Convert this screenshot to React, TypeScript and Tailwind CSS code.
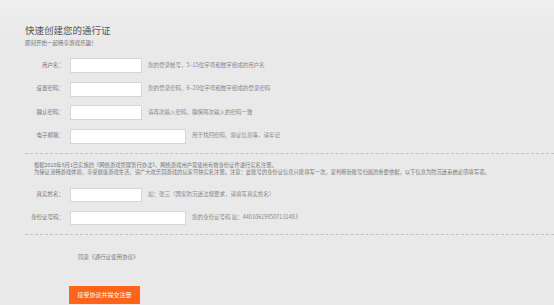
import React from "react";

const font = { fontFamily: '"Noto Sans CJK SC", "Noto Sans", sans-serif' };

type RowProps = { label: string; hint: string; wide?: boolean; tall?: boolean };

const Row = ({ label, hint, wide, tall }: RowProps) => (
  <div className={`flex items-center ${tall ? "h-[15px]" : "h-[14px]"}`}>
    <label className="w-[39px] text-right text-[5.5px] leading-none text-[#777] whitespace-nowrap">
      {label}
    </label>
    <input
      type="text"
      className={`ml-[6px] h-full bg-white border border-[#d6d6d6] outline-none ${
        wide ? "w-[116px]" : "w-[72px]"
      }`}
    />
    <span className="ml-[6px] text-[5.5px] leading-none text-[#888] whitespace-nowrap">
      {hint}
    </span>
  </div>
);

export default function App() {
  return (
    <div
      style={font}
      className="w-[554px] h-[305px] overflow-hidden bg-[linear-gradient(#efefef,#e9e9e9_40px)] pl-[25px] pt-[25px]"
    >
      <h1 className="text-[9.5px] leading-[10px] text-[#555] font-normal">
        快速创建您的通行证
      </h1>
      <p className="mt-[5px] text-[5.5px] leading-[6px] text-[#777]">
        即刻开始一起畅享游戏乐趣！
      </p>

      <div className="mt-[12px] flex flex-col gap-[8.5px]">
        <Row label="用户名：" hint="您的登录帐号，5~15位字母和数字组成的用户名" tall />
        <Row label="设置密码：" hint="您的登录密码，6~20位字母和数字组成的登录密码" tall />
        <Row label="确认密码：" hint="请再次输入密码，确保两次输入的密码一致" tall />
        <Row label="电子邮箱：" hint="用于找回密码、验证信息等，请牢记" wide tall />
      </div>

      <div className="mt-[9px] border-t border-dashed border-[#c2c2c2]" />

      <div className="mt-[8px] ml-[9px] text-[5.3px] leading-[7px] text-[#777] whitespace-nowrap">
        <p>
          根据2010年8月1日实施的《网络游戏管理暂行办法》，网络游戏用户需使用有效身份证件进行实名注册。
        </p>
        <p>
          为保证流畅游戏体验，享受健康游戏生活，请广大欢乐园游戏的玩家尽快实名注册。注意：此账号的身份证信息只能填写一次，是判断新账号归属的重要依据，以下信息为防沉迷系统必须填写项。
        </p>
      </div>

      <div className="mt-[12px] flex flex-col gap-[9px]">
        <Row label="真实姓名：" hint="如：张三（国家防沉迷法规要求，请填写真实姓名）" />
        <Row label="身份证号码：" hint="您的身份证号码 如：440106198507131483" wide />
      </div>

      <div className="mt-[9px] border-t border-dashed border-[#c2c2c2]" />

      <p className="mt-[19px] ml-[53px] text-[5.5px] leading-[6px] text-[#777]">
        同意《通行证使用协议》
      </p>

      <button
        type="button"
        className="mt-[26px] ml-[44px] w-[71px] h-[18px] bg-[#ff6418] text-white text-[6px] leading-none flex items-center justify-center"
      >
        接受协议并提交注册
      </button>
    </div>
  );
}
